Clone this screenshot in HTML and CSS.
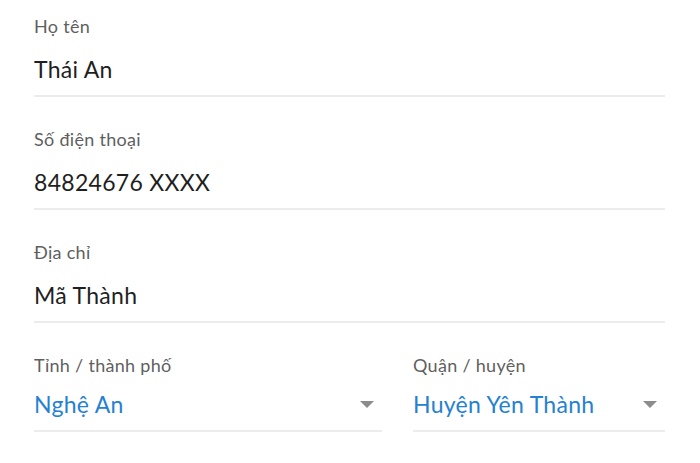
FILE: index.html
```html
<!DOCTYPE html>
<html lang="vi">
<head>
    <meta charset="UTF-8">
    <meta name="viewport" content="width=device-width, initial-scale=1.0">
    <title>Địa chỉ giao hàng</title>
    <link rel="stylesheet" href="styles.css">
</head>
<body>
    <form class="address-form">
        <div class="field">
            <div class="field-label">Họ tên</div>
            <div class="field-value">Thái An</div>
        </div>

        <div class="field">
            <div class="field-label">Số điện thoại</div>
            <div class="field-value">84824676 XXXX</div>
        </div>

        <div class="field">
            <div class="field-label">Địa chỉ</div>
            <div class="field-value">Mã Thành</div>
        </div>

        <div class="field-row">
            <div class="field">
                <div class="field-label">Tỉnh / thành phố</div>
                <div class="field-value select">
                    <span>Nghệ An</span>
                    <span class="caret"></span>
                </div>
            </div>
            <div class="field">
                <div class="field-label">Quận / huyện</div>
                <div class="field-value select">
                    <span>Huyện Yên Thành</span>
                    <span class="caret"></span>
                </div>
            </div>
        </div>
    </form>
</body>
</html>
```

FILE: styles.css
```css
body {
    margin: 0;
    background-color: #fff;
    font-family: Lato, "Noto Sans", sans-serif;
}
.address-form {
    padding: 16px 35px 0 34px;
}
.field {
    margin-bottom: 32px;
}
.field-label {
    font-size: 18px;
    line-height: 21px;
    letter-spacing: 0.3px;
    color: #5f5f5f;
}
.field-value {
    margin-top: 18px;
    padding-bottom: 12px;
    font-size: 23px;
    line-height: 28px;
    letter-spacing: 0.3px;
    color: #1f1f1f;
    border-bottom: 2px solid #ececec;
}
.field-row {
    display: grid;
    grid-template-columns: 348fr 252fr;
    gap: 31px;
}
.select {
    display: flex;
    align-items: center;
    justify-content: space-between;
    margin-top: 14px;
    color: #2581d1;
}
.caret {
    width: 0;
    height: 0;
    margin-right: 8px;
    border-left: 7px solid transparent;
    border-right: 7px solid transparent;
    border-top: 7px solid #8c8c8c;
}
```
